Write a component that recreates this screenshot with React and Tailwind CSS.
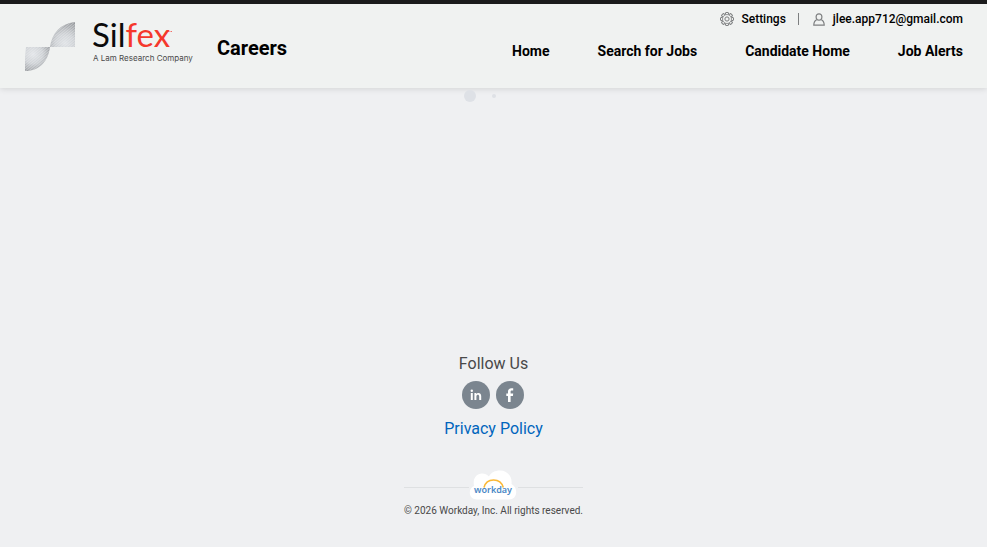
import React from 'react';

const navItems = ['Home', 'Search for Jobs', 'Candidate Home', 'Job Alerts'];

function SilfexLogo() {
  return (
    <svg width="174" height="76" viewBox="0 -12 174 76" role="img" aria-label="Silfex, A Lam Research Company">
      <defs>
        <radialGradient id="leafTop" gradientUnits="userSpaceOnUse" cx="41" cy="21" r="24">
          <stop offset="0" stopColor="#dfe3e7" />
          <stop offset="0.4" stopColor="#ccd0d4" />
          <stop offset="1" stopColor="#85888c" />
        </radialGradient>
        <radialGradient id="leafBottom" gradientUnits="userSpaceOnUse" cx="9" cy="32" r="24">
          <stop offset="0" stopColor="#e3e6ea" />
          <stop offset="0.4" stopColor="#ccd0d4" />
          <stop offset="1" stopColor="#74777b" />
        </radialGradient>
        <pattern id="hatch" width="2" height="2" patternUnits="userSpaceOnUse" patternTransform="rotate(-40)">
          <rect width="2" height="0.7" fill="#f0f2f1" fillOpacity="0.6" />
        </pattern>
      </defs>
      <path d="M51 0C36 2 28 11 26 25H51Z" fill="url(#leafTop)" />
      <path d="M2 25H26C24 39 16 49 1 49V36Z" fill="url(#leafBottom)" />
      <path d="M51 0C36 2 28 11 26 25H51ZM2 25H26C24 39 16 49 1 49V36Z" fill="url(#hatch)" />
      <text x="68" y="25" className="font-['Lato',sans-serif] text-[33px]" fill="#0b0b0b">
        Sil<tspan fill="#f5382c">fex</tspan>
      </text>
      <path d="M143.500 9.500h2M146.500 9.500h1.500" stroke="#f5382c" strokeOpacity="0.7" />
      <text x="69" y="39" className="font-['Inter',sans-serif] text-[8px]" fill="#4a4a4a">
        A Lam Research Company
      </text>
    </svg>
  );
}

function GearIcon() {
  const angles = [0, 45, 90, 135, 180, 225, 270, 315];
  return (
    <svg width="14" height="14" viewBox="0 0 14 14" fill="none" stroke="#7d7f80" aria-hidden="true">
      <circle cx="7" cy="7" r="2.100" />
      <circle cx="7" cy="7" r="4.500" strokeWidth="0.8" />
      {angles.map((a) => (
        <path key={a} d="M5.300 2.600L5.600 .7Q7 .2 8.400 .7L8.700 2.600" transform={`rotate(${a} 7 7)`} />
      ))}
    </svg>
  );
}

function UserIcon() {
  return (
    <svg width="12" height="13" viewBox="0 0 12 13" fill="none" stroke="#7d7f80" strokeWidth="1.200" aria-hidden="true">
      <path d="M6 .8C4.200 .8 3.100 2 3.100 3.800C3.100 5.600 4.300 7.200 6 7.200S8.900 5.600 8.900 3.800C8.900 2 7.800 .8 6 .8Z" />
      <path d="M3.700 6.800C1.800 7.600 .9 8.900 .8 12.100H11.200C11.100 8.900 10.200 7.600 8.300 6.800" />
    </svg>
  );
}

function WorkdayLogo() {
  return (
    <svg width="48" height="30" viewBox="0 0 48 30" role="img" aria-label="Workday">
      <path
        d="M8 29.500C3.500 29.500 .8 26.500 .8 22.500C.8 19.500 2.500 17 5 16C3.500 8.500 7.500 3.500 13 3.500C16 3.500 18 4.500 20 6.500C22 2.500 26 .5 31 .5C38 .5 43.500 6 42.500 14C45.500 15.500 47.200 18.500 47.200 22C47.200 26.500 44.500 29.500 40 29.500Z"
        fill="#fff"
      />
      <path d="M15 17.500C17.500 7.500 31.500 7.500 34.300 17.500" fill="none" stroke="#fbb836" strokeWidth="1.600" />
      <text x="24" y="23" textAnchor="middle" className="font-['Noto_Sans',sans-serif] text-[9px] font-semibold" fill="#4a87c5">
        workday
      </text>
    </svg>
  );
}

export default function App() {
  return (
    <div className="flex min-h-screen flex-col bg-[#eff0f2] font-['Roboto',sans-serif] text-black">
      <header className="flex h-[88px] shrink-0 items-start justify-between border-t-4 border-[#1b1b1c] bg-[#f0f2f1] px-6 shadow-[0_1px_6px_rgba(0,0,0,0.12)]">
        <div className="flex items-center gap-5 pt-[6px]">
          <a href="#home"><SilfexLogo /></a>
          <h1 className="-ml-px text-xl leading-6 font-bold">Careers</h1>
        </div>
        <div className="flex flex-col items-end gap-3 pt-[7px]">
          <div className="flex h-4 items-center text-xs font-medium">
            <button type="button" className="flex items-center gap-[7px]"><GearIcon />Settings</button>
            <span className="mr-[14px] ml-3 h-3 w-px bg-[#7d7f80]" />
            <button type="button" className="flex items-center gap-2"><UserIcon />jlee.app712@gmail.com</button>
          </div>
          <nav className="flex gap-12 text-sm leading-6 font-bold">
            {navItems.map((item) => (
              <a key={item} href="#nav">{item}</a>
            ))}
          </nav>
        </div>
      </header>

      <main className="flex grow justify-center">
        <div className="flex h-4 items-center gap-4" role="status" aria-label="Loading">
          <span className="size-3 rounded-full bg-[#dee1e6]" />
          <span className="size-1 rounded-full bg-[#dee1e6]" />
          <span className="size-3" />
        </div>
      </main>

      <footer className="flex flex-col items-center pb-7">
        <h2 className="text-base leading-6 text-[#494949]">Follow Us</h2>
        <div className="mt-[5px] flex gap-[6px] pr-px">
          <a href="#linkedin" aria-label="LinkedIn" className="flex size-7 items-center justify-center rounded-full bg-[#7b858f]">
            <svg width="12" height="12" viewBox="0 0 12 12" fill="#fff" aria-hidden="true">
              <circle cx="1.800" cy="1.800" r="1.200" />
              <path d="M.8 4H2.800V11H.8ZM4.400 4H6.300V5C7.400 3.300 11.200 3.300 11.200 6.900V11H9.200V7.400C9.200 5 6.400 5.100 6.400 7.400V11H4.400Z" />
            </svg>
          </a>
          <a href="#facebook" aria-label="Facebook" className="flex size-7 items-center justify-center rounded-full bg-[#7b858f]">
            <svg width="8" height="14" viewBox="0 0 8 14" fill="#fff" aria-hidden="true">
              <path d="M2 14V8H.3V5.500H2V3.700C2 1.400 3.300 .2 5.400 .2H7.200V2.500H5.900C4.900 2.500 4.600 3 4.600 3.800V5.500H7.200L6.900 8H4.600V14Z" />
            </svg>
          </a>
        </div>
        <a href="#privacy" className="mt-2 text-base leading-6 text-[#0065bd]">Privacy Policy</a>
        <div className="mt-[29px] flex flex-col">
          <div className="flex items-center">
            <span className="mt-1 h-px grow bg-[#dee0e2]" />
            <WorkdayLogo />
            <span className="mt-1 ml-px h-px grow bg-[#dee0e2]" />
          </div>
          <p className="mt-[3px] text-[10px] leading-4 text-[#494949]">© 2026 Workday, Inc. All rights reserved.</p>
        </div>
      </footer>
    </div>
  );
}
